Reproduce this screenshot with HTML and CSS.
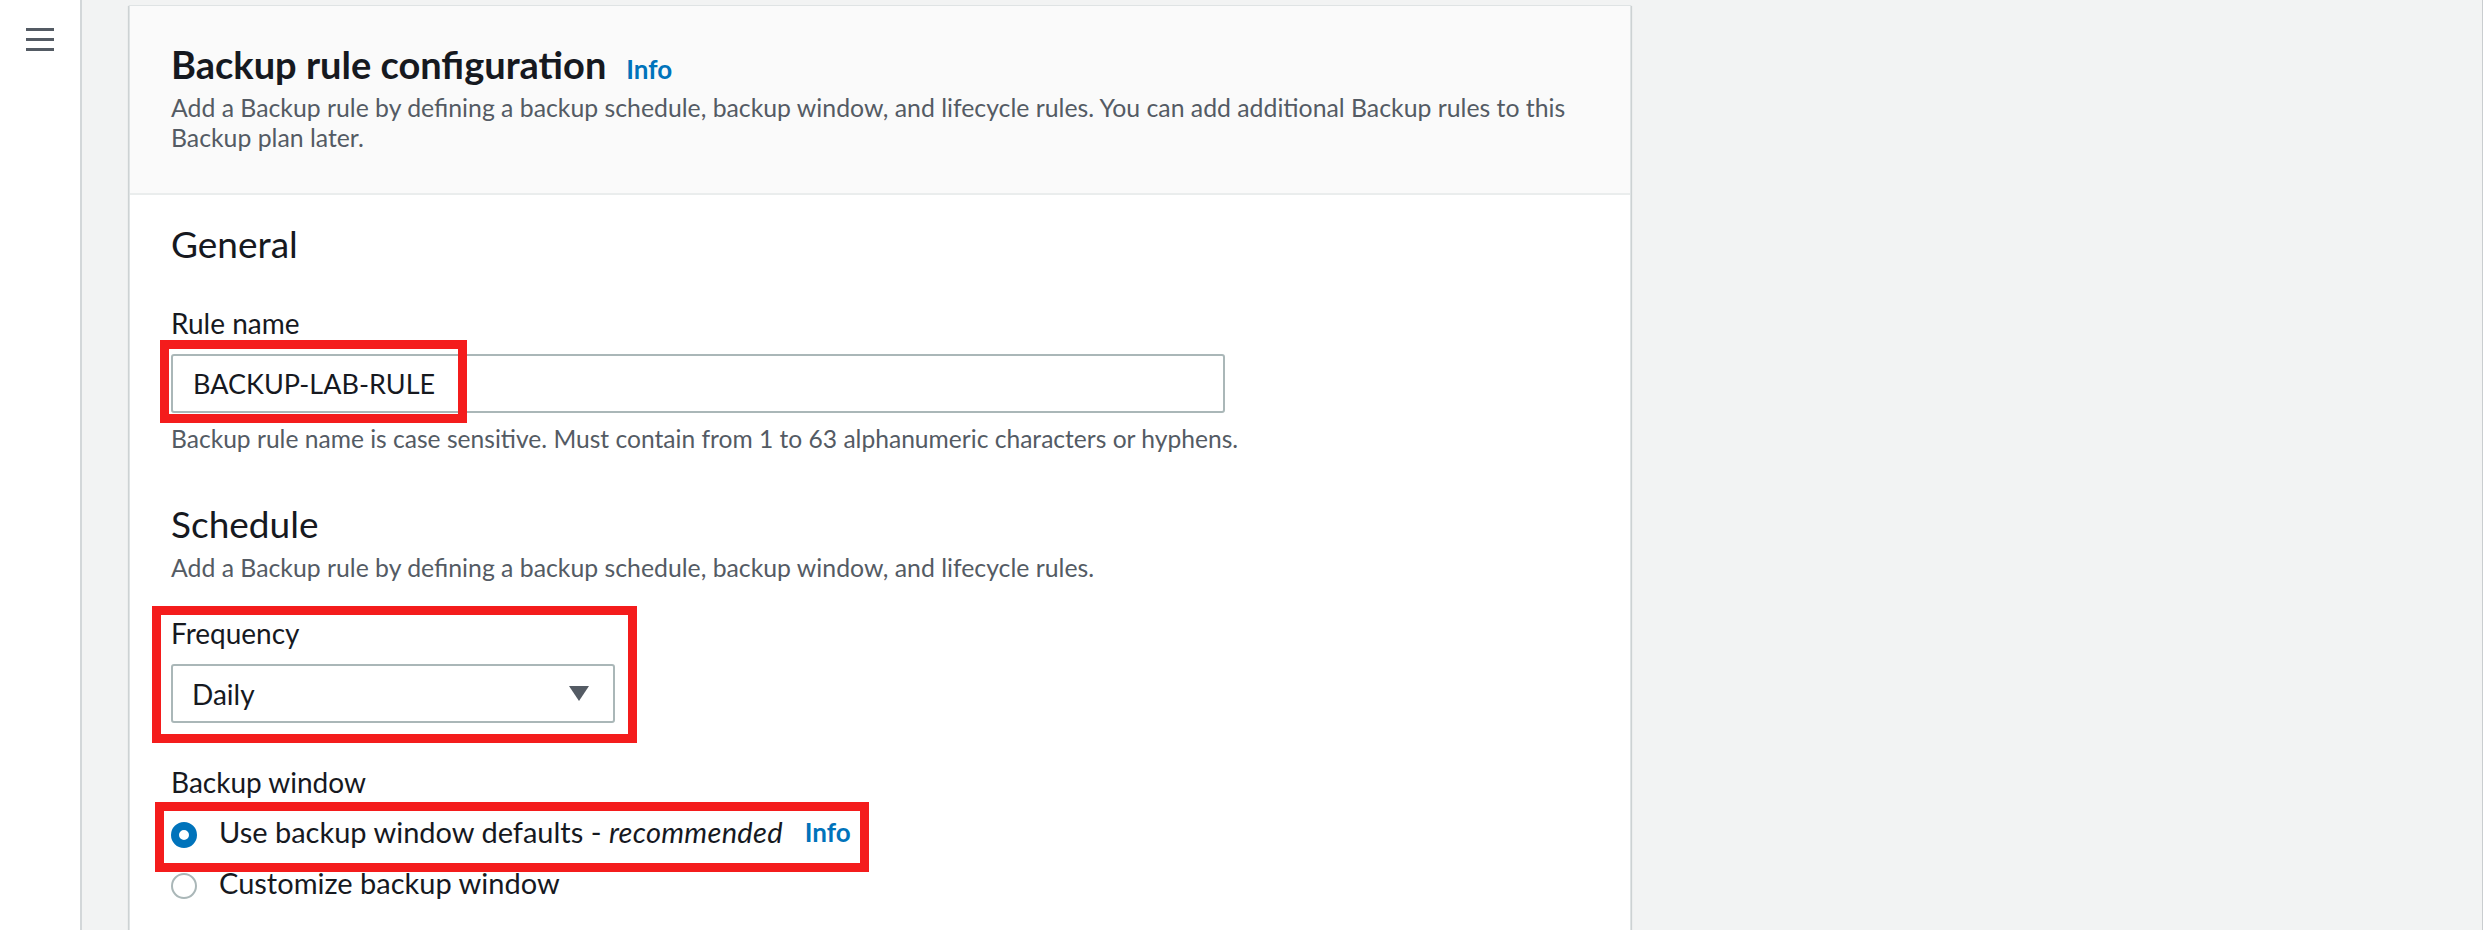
FILE: index.html
```html
<!DOCTYPE html>
<html lang="en">
<head>
<meta charset="utf-8">
<title>Backup rule configuration</title>
<link rel="stylesheet" href="styles.css">
</head>
<body>
<div class="app">
  <nav class="sidebar">
    <svg class="menu-icon" width="28" height="23" viewBox="0 0 28 23" aria-hidden="true">
      <rect x="0" y="0" width="28" height="3" fill="#545b64"/>
      <rect x="0" y="10" width="28" height="3" fill="#545b64"/>
      <rect x="0" y="20" width="28" height="3" fill="#545b64"/>
    </svg>
  </nav>
  <main class="content">
    <section class="card">
      <header class="card-header">
        <div class="title-row">
          <h2 class="title">Backup rule configuration</h2>
          <a class="info">Info</a>
        </div>
        <p class="desc header-desc">Add a Backup rule by defining a backup schedule, backup window, and lifecycle rules. You can add additional Backup rules to this Backup plan later.</p>
      </header>
      <div class="card-body">
        <h3 class="section-title">General</h3>
        <div class="field field-rule">
          <div class="label">Rule name</div>
          <div class="input-wrap">
            <div class="input">BACKUP-LAB-RULE</div>
            <span class="mark mark-input"></span>
          </div>
          <p class="desc hint">Backup rule name is case sensitive. Must contain from 1 to 63 alphanumeric characters or hyphens.</p>
        </div>
        <h3 class="section-title schedule-title">Schedule</h3>
        <p class="desc schedule-desc">Add a Backup rule by defining a backup schedule, backup window, and lifecycle rules.</p>
        <div class="field field-freq">
          <div class="label">Frequency</div>
          <div class="select">
            <span>Daily</span>
            <svg class="caret" width="20" height="15" viewBox="0 0 20 15" aria-hidden="true"><path d="M0 0 H20 L10 15 Z" fill="#545b64"/></svg>
          </div>
          <span class="mark mark-freq"></span>
        </div>
        <div class="field field-window">
          <div class="label">Backup window</div>
          <div class="radio-row radio-first">
            <span class="radio radio-on"></span>
            <span class="radio-text">Use backup window defaults - <em>recommended</em></span>
            <a class="info radio-info">Info</a>
            <span class="mark mark-radio"></span>
          </div>
          <div class="radio-row radio-second">
            <span class="radio"></span>
            <span class="radio-text">Customize backup window</span>
          </div>
        </div>
      </div>
    </section>
  </main>
</div>
</body>
</html>
```

FILE: styles.css
```css
* { box-sizing: border-box; }
html, body {
  margin: 0;
  padding: 0;
  height: 930px;
  overflow: hidden;
  background: #ffffff;
  font-family: "Lato", "Open Sans", sans-serif;
  color: #16191f;
}
p, h2, h3 { margin: 0; }

.app {
  display: flex;
  height: 930px;
}

.sidebar {
  width: 82px;
  flex: 0 0 82px;
  background: #ffffff;
  border-right: 2px solid #d3d7d9;
  padding: 28px 0 0 26px;
}
.menu-icon { display: block; }

.content {
  flex: 1;
  background: #f2f3f3;
  padding: 5px 0 0 47px;
  margin-right: 1px;
  border-right: 1px solid #c9cdcf;
  overflow: hidden;
}

.card {
  width: 1502px;
  background: #ffffff;
  border: 1px solid #dfe3e4;
  border-bottom: none;
  box-shadow: 0 1px 1px 0 rgba(0, 28, 36, 0.2), 1px 1px 1px 0 rgba(0, 28, 36, 0.12), -1px 1px 1px 0 rgba(0, 28, 36, 0.12);
  min-height: 940px;
}

.card-header {
  background: #fafafa;
  border-bottom: 2px solid #eaeded;
  padding: 36px 41px 40px 41px;
}

.title-row {
  display: flex;
  align-items: baseline;
  gap: 20px;
}
.title {
  font-size: 38px;
  line-height: 44px;
  font-weight: 700;
  color: #16191f;
}
.info {
  font-size: 26px;
  font-weight: 700;
  color: #0073bb;
  text-decoration: none;
}

.desc {
  font-size: 24.8px;
  line-height: 30px;
  color: #545b64;
}
.header-desc { margin-top: 7px; }

.card-body {
  padding: 27px 41px 0 41px;
}

.section-title {
  font-size: 37px;
  line-height: 44px;
  font-weight: 400;
  color: #16191f;
}

.label {
  font-size: 28px;
  line-height: 30px;
  color: #16191f;
}

.field { position: relative; }
.field-rule { margin-top: 42px; }

.input-wrap {
  position: relative;
  margin-top: 16px;
  width: 1054px;
}
.input {
  height: 59px;
  border: 2px solid #aab7b8;
  border-radius: 3px;
  padding: 0 20px;
  display: flex;
  align-items: center;
  font-size: 27px;
  color: #16191f;
  background: #ffffff;
}

.hint { margin-top: 11px; font-size: 24.6px; }

.schedule-title { margin-top: 48px; }
.schedule-desc { margin-top: 7px; }

.field-freq { margin-top: 35px; width: 444px; }
.select {
  margin-top: 16px;
  height: 59px;
  border: 2px solid #aab7b8;
  border-radius: 3px;
  padding: 0 24px 0 19px;
  display: flex;
  align-items: center;
  justify-content: space-between;
  font-size: 28px;
  line-height: 30px;
  color: #16191f;
}
.caret { display: block; }

.field-window { margin-top: 44px; }

.radio-row {
  position: relative;
  display: flex;
  align-items: center;
  height: 40px;
  font-size: 29px;
  line-height: 40px;
  color: #16191f;
  width: max-content;
}
.radio-first { margin-top: 15px; }
.radio-second { margin-top: 11px; }

.radio {
  width: 26px;
  height: 26px;
  border-radius: 50%;
  border: 2px solid #aab7b8;
  background: #ffffff;
  margin-right: 22px;
  margin-top: 6px;
  flex: 0 0 26px;
}
.radio-on {
  border: 8px solid #0073bb;
}
.radio-text em { font-style: italic; letter-spacing: 0.3px; }
.radio-info { margin-left: 22px; }

.mark {
  position: absolute;
  border: 9px solid #f41c1c;
  pointer-events: none;
}
.mark-input {
  left: -11px;
  top: -14px;
  width: 307px;
  height: 83px;
}
.mark-freq {
  left: -19px;
  top: -12px;
  width: 485px;
  height: 137px;
}
.mark-radio {
  left: -16px;
  top: -10px;
  width: 714px;
  height: 70px;
}
```
